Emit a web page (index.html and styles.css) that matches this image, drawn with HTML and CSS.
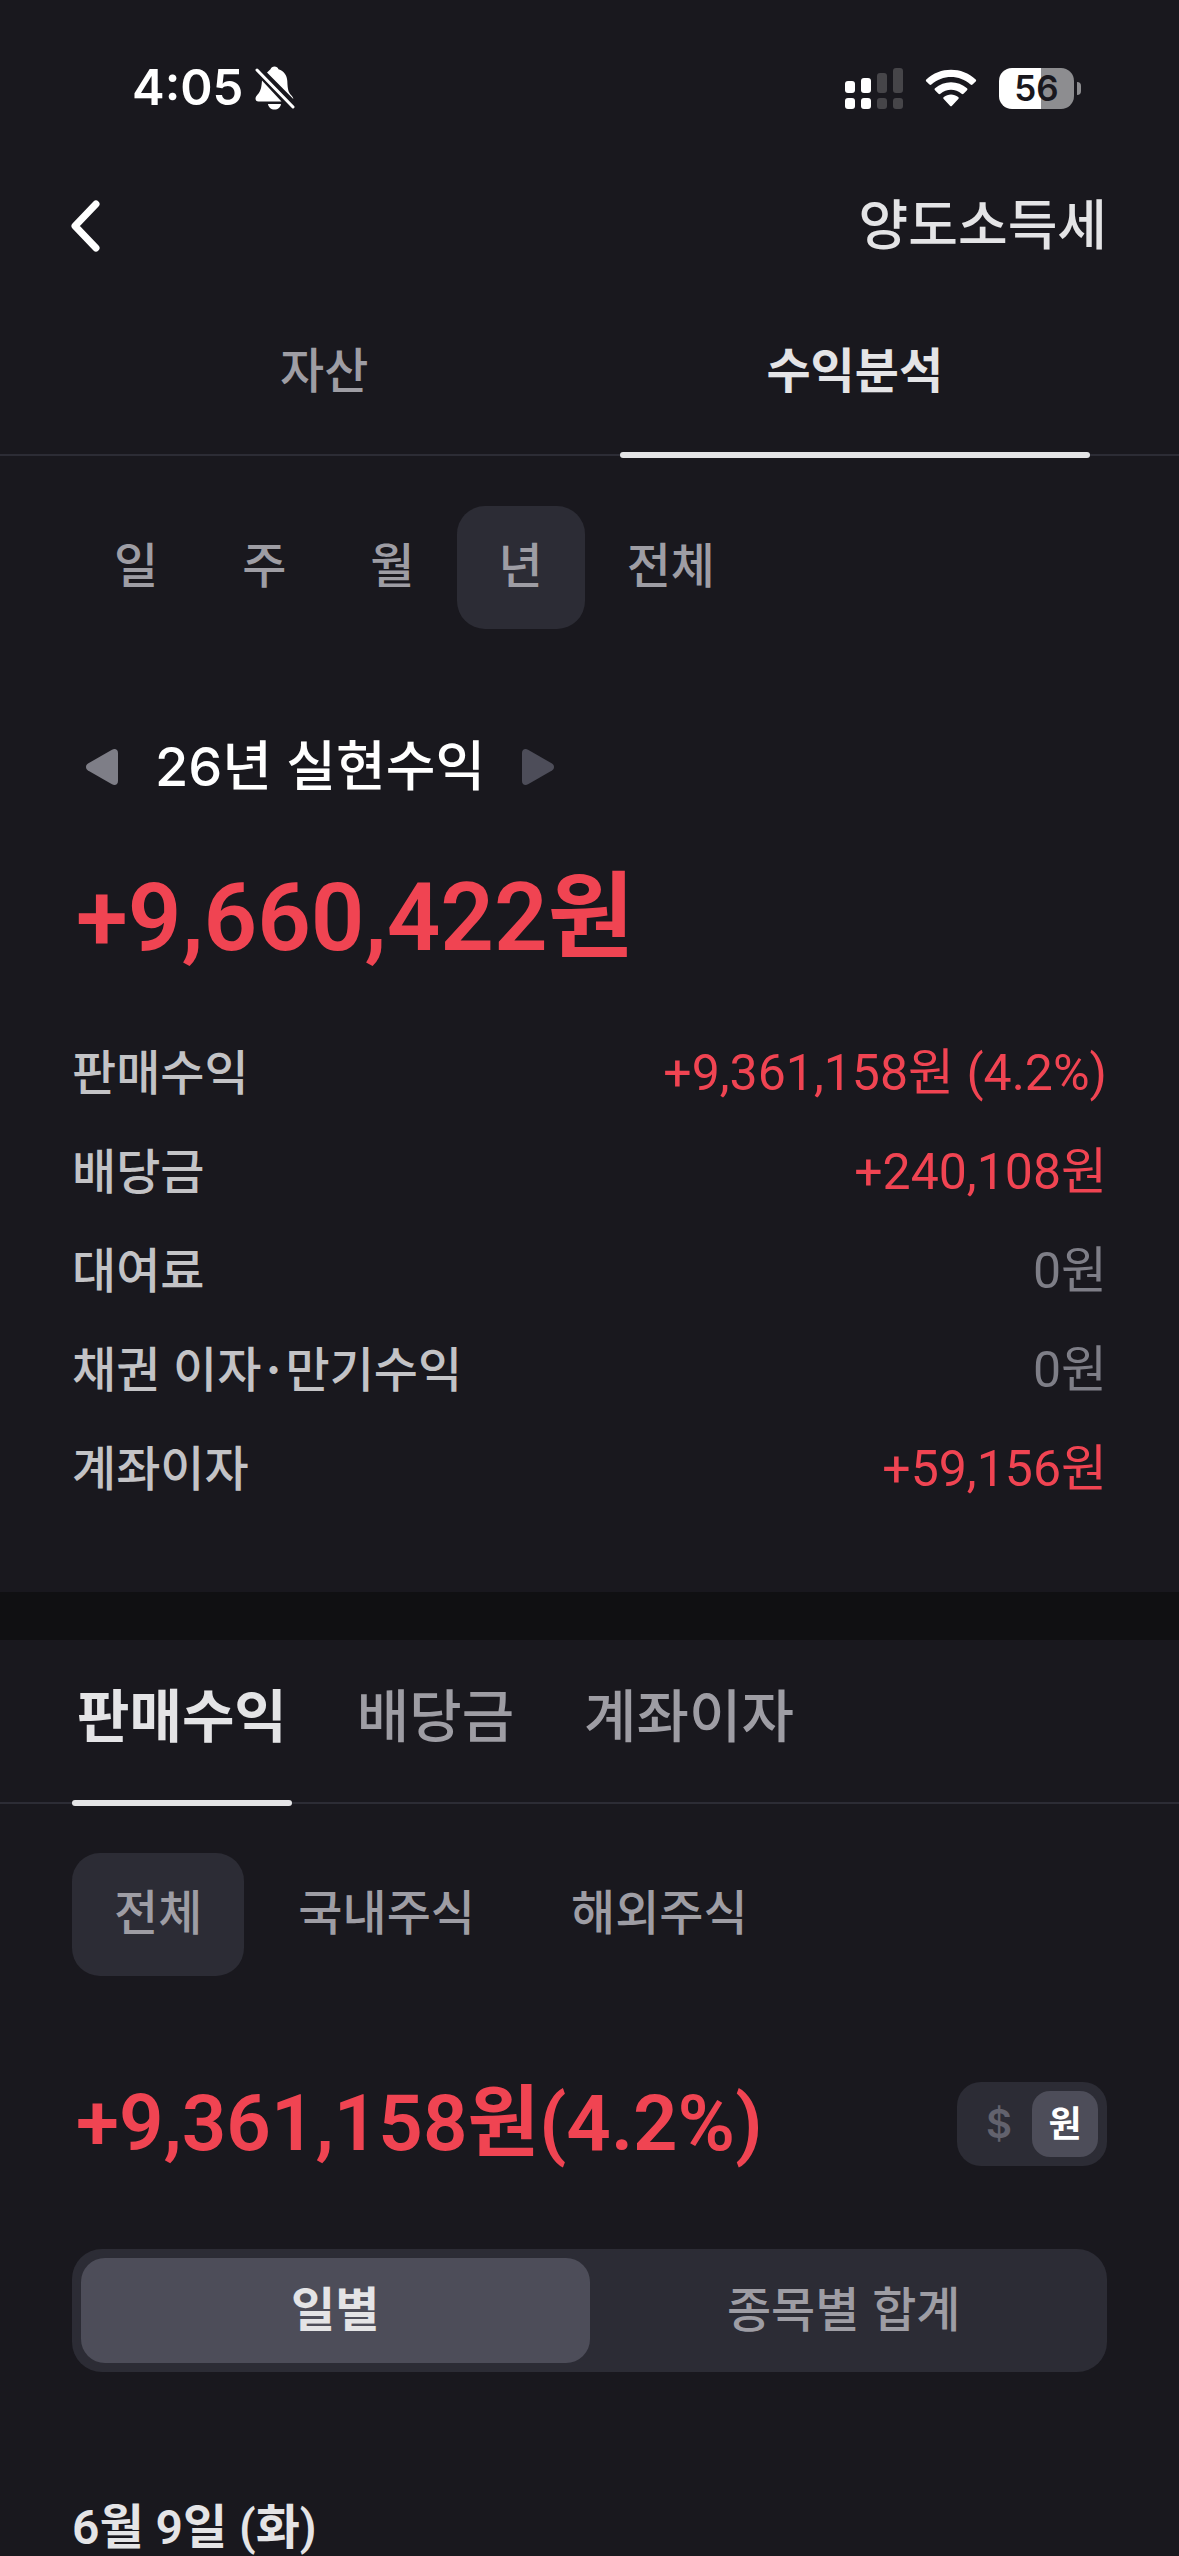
FILE: index.html
```
<!DOCTYPE html>
<html lang="ko">

<head>
    <meta charset="UTF-8">
    <meta name="viewport" content="width=device-width, initial-scale=1.0">
    <title>수익분석</title>
    <link rel="stylesheet" href="styles.css">
</head>

<body>
    <div class="status">
        <div class="status-left">
            <span class="time">4:05</span>
            <svg class="bell" width="40" height="44" viewBox="0 0 40 44">
                <path fill="#fff" d="M12 6.500C13.500 5 15 4 15.500 3.300C16.200 1.500 17.500 .5 19.500 .5C21.500 .5 22.800 1.500 23.500 3.300C29 5 32 9.500 32.300 15C32.600 24 33.500 26 36 29C37.300 30.500 38.300 31.500 38.300 33Z" />
                <path fill="#fff" d="M7 14.500L26.500 35.500H3.500C1.500 35.500 .5 34.300 .5 32.500C.5 30.500 2 29.500 3.500 27.500C6 24 6.500 21 7 14.500Z" />
                <path fill="#fff" d="M13 38H26C25.500 41.500 23 43.500 19.500 43.500C16 43.500 13.500 41.500 13 38Z" />
                <path stroke="#fff" stroke-width="3" stroke-linecap="round" d="M2 4L38 41" />
            </svg>
        </div>
        <div class="status-right">
            <svg width="58" height="41" viewBox="0 0 58 41" fill="#fff">
                <rect x="0" y="13" width="10" height="12" rx="3" />
                <rect x="16" y="10" width="10" height="15" rx="3" />
                <rect x="0" y="30" width="10" height="11" rx="3" />
                <rect x="16" y="30" width="10" height="11" rx="3" />
                <g fill="#464549">
                    <rect x="32" y="5" width="10" height="20" rx="3" />
                    <rect x="48" y="0" width="10" height="25" rx="3" />
                    <rect x="32" y="30" width="10" height="11" rx="3" />
                    <rect x="48" y="30" width="10" height="11" rx="3" />
                </g>
            </svg>
            <svg class="wifi" width="52" height="38" viewBox="0 0 52 38" fill="#fff">
                <path d="M1.300 10.500C15 -2.500 37 -2.500 50.700 10.500C51.300 11.100 51.300 11.800 50.700 12.400L47.500 15.600C46.900 16.200 46.200 16.200 45.600 15.600C34.500 5.500 17.500 5.500 6.400 15.600C5.800 16.200 5.100 16.200 4.500 15.600L1.300 12.400C.7 11.800 .7 11.100 1.300 10.500Z" />
                <path d="M10 19.300C19 11.100 33 11.100 42 19.300C42.600 19.900 42.600 20.600 42 21.200L38.500 24.700C37.900 25.300 37.200 25.300 36.600 24.800C30.500 19.500 21.500 19.500 15.400 24.800C14.800 25.300 14.100 25.300 13.500 24.700L10 21.200C9.400 20.600 9.400 19.900 10 19.300Z" />
                <path d="M18.800 28C23 24.600 29 24.600 33.200 28C33.900 28.600 33.900 29.300 33.300 29.900L27 36.800C26.400 37.500 25.600 37.500 25 36.800L18.700 29.900C18.100 29.300 18.100 28.600 18.800 28Z" />
            </svg>
            <div class="battery"><span class="battery-level">56</span></div>
        </div>
    </div>

    <header class="header">
        <button class="back" type="button" aria-label="뒤로">
            <svg width="30" height="54" viewBox="0 0 30 54" fill="none" stroke="#fff" stroke-width="7" stroke-linecap="round" stroke-linejoin="round">
                <path d="M26 5L5 27L26 49" />
            </svg>
        </button>
        <a class="header-link" href="#">양도소득세</a>
    </header>

    <nav class="tabs">
        <button class="tab" type="button">자산</button>
        <button class="tab selected" type="button">수익분석</button>
    </nav>

    <main>
        <section class="summary">
            <div class="filters period">
                <button class="filter" type="button">일</button>
                <button class="filter" type="button">주</button>
                <button class="filter" type="button">월</button>
                <button class="filter selected" type="button">년</button>
                <button class="filter" type="button">전체</button>
            </div>

            <div class="year">
                <button class="arrow" type="button" aria-label="이전">
                    <svg width="34" height="38" viewBox="0 0 34 38">
                        <path fill="#7e7e87" d="M3 15.500L27 1.700C30 0 33 1.500 33 5V33C33 36.500 30 38 27 36.300L3 22.500C.3 20.800 .3 17.200 3 15.500Z" />
                    </svg>
                </button>
                <h1 class="year-title">26년 실현수익</h1>
                <button class="arrow" type="button" aria-label="다음">
                    <svg width="34" height="38" viewBox="0 0 34 38">
                        <path fill="#4d4d59" d="M31 15.500L7 1.700C4 0 1 1.500 1 5V33C1 36.500 4 38 7 36.300L31 22.500C33.700 20.800 33.700 17.200 31 15.500Z" />
                    </svg>
                </button>
            </div>

            <p class="total">+9,660,422원</p>

            <dl class="rows">
                <div class="row">
                    <dt>판매수익</dt>
                    <dd class="up">+9,361,158원 (4.2%)</dd>
                </div>
                <div class="row">
                    <dt>배당금</dt>
                    <dd class="up">+240,108원</dd>
                </div>
                <div class="row">
                    <dt>대여료</dt>
                    <dd>0원</dd>
                </div>
                <div class="row">
                    <dt>채권 이자<span class="dot">·</span>만기수익</dt>
                    <dd>0원</dd>
                </div>
                <div class="row">
                    <dt>계좌이자</dt>
                    <dd class="up">+59,156원</dd>
                </div>
            </dl>
        </section>

        <section class="detail">
            <nav class="subtabs">
                <button class="subtab selected" type="button">판매수익</button>
                <button class="subtab" type="button">배당금</button>
                <button class="subtab" type="button">계좌이자</button>
            </nav>

            <div class="filters market">
                <button class="filter selected" type="button">전체</button>
                <button class="filter" type="button">국내주식</button>
                <button class="filter" type="button">해외주식</button>
            </div>

            <div class="amount">
                <p class="amount-text">+9,361,158원(4.2%)</p>
                <div class="currency">
                    <button class="unit" type="button">$</button>
                    <button class="unit selected" type="button">원</button>
                </div>
            </div>

            <div class="segment">
                <button class="segment-item selected" type="button">일별</button>
                <button class="segment-item" type="button">종목별 합계</button>
            </div>

            <h2 class="date">6월 9일 (화)</h2>
        </section>
    </main>
</body>

</html>
```
FILE: styles.css
```
* {
    margin: 0;
    padding: 0;
    box-sizing: border-box;
}
body {
    background-color: #19181e;
    color: #e4e4e6;
    font-family: "Inter", "Noto Sans CJK KR", sans-serif;
    font-size: 48px;
    font-weight: 500;
    line-height: 60px;
}
button {
    border: none;
    background: none;
    color: inherit;
    font: inherit;
    cursor: pointer;
}
a {
    color: inherit;
    text-decoration: none;
}
svg {
    display: block;
}

/* 상태바 */
.status {
    display: flex;
    justify-content: space-between;
    align-items: center;
    height: 176px;
    padding: 0 105px 0 132px;
    color: #fff;
}
.status-left, .status-right {
    display: flex;
    align-items: center;
}
.status-left {
    gap: 12px;
}
.status-right {
    gap: 22px;
}
.time {
    font-size: 49px;
    font-weight: 600;
}
.battery {
    position: relative;
    width: 75px;
    height: 41px;
    border-radius: 13px;
    background: linear-gradient(to right, #fff 56%, #8d8d90 56%);
    color: #19181e;
    text-align: center;
}
.battery::after {
    content: "";
    position: absolute;
    top: 14px;
    right: -7px;
    width: 4px;
    height: 13px;
    border-radius: 0 4px 4px 0;
    background-color: #8d8d90;
}
.battery-level {
    display: block;
    font-size: 35px;
    font-weight: 600;
    line-height: 41px;
}

/* 헤더 */
.header {
    display: flex;
    justify-content: space-between;
    align-items: center;
    height: 100px;
    padding: 0 72px 0 70px;
}
.header-link {
    font-size: 54px;
}

/* 상단 탭 */
.tabs {
    display: flex;
    padding: 0 59px;
    border-bottom: 2px solid #2c2c35;
}
.tab {
    position: relative;
    flex: 1;
    padding: 65px 0 53px;
    color: #9e9da4;
}
.tab.selected, .subtab.selected {
    color: #e4e4e6;
    font-weight: 600;
}
.tab.selected::after, .subtab.selected::after {
    content: "";
    position: absolute;
    bottom: -4px;
    left: 0;
    right: 0;
    height: 6px;
    border-radius: 3px;
    background-color: #e4e4e6;
}
.tab.selected::after {
    left: 30px;
    right: 30px;
}

/* 필터 */
.filters {
    display: flex;
}
.filter {
    padding: 30px 42px 33px;
    border-radius: 28px;
    color: #9e9da4;
}
.filter.selected {
    background-color: #2c2c35;
}

/* 실현수익 */
.summary {
    padding: 50px 72px 93px;
}
.year {
    display: flex;
    align-items: center;
    gap: 36px;
    margin-top: 102px;
    padding-left: 13px;
}
.year-title {
    color: #fff;
    font-size: 54px;
    font-weight: 500;
    line-height: 72px;
}
/* 금액은 숫자 폭이 좁은 Roboto 사용 */
.total, .amount-text, .row dd, .date {
    font-family: "Roboto", "Noto Sans CJK KR", sans-serif;
}
.total {
    margin-top: 59px;
    padding-left: 4px;
    color: #f04452;
    font-size: 94px;
    font-weight: 600;
    line-height: 112px;
}
.rows {
    display: grid;
    gap: 39px;
    margin-top: 69px;
}
.row {
    display: flex;
    justify-content: space-between;
}
.row dt {
    color: #c3c3c6;
}
.row dd {
    color: #7e7e87;
    font-size: 50px;
    font-weight: 400;
}
.row .up {
    color: #f04452;
}
.dot {
    margin: 0 4px;
    font-weight: 700;
}

/* 상세 */
.detail {
    border-top: 48px solid #101012;
}
.subtabs {
    display: flex;
    gap: 60px;
    padding: 0 72px;
    border-bottom: 2px solid #2c2c35;
}
.subtab {
    position: relative;
    padding: 41px 5px 49px;
    color: #9e9da4;
    font-size: 57px;
    line-height: 72px;
}
.market {
    gap: 12px;
    padding: 49px 72px 0;
}
.amount {
    display: flex;
    justify-content: space-between;
    align-items: center;
    margin-top: 106px;
    padding: 0 72px 0 76px;
}
.amount-text {
    color: #f04452;
    font-size: 78px;
    font-weight: 600;
    line-height: 84px;
}
.currency {
    display: flex;
    padding: 9px;
    border-radius: 24px;
    background-color: #2c2c35;
}
.unit {
    width: 66px;
    height: 66px;
    border-radius: 18px;
    color: #62626d;
    font-size: 40px;
    font-weight: 600;
    line-height: 66px;
}
.unit.selected {
    background-color: #4d4d59;
    color: #fff;
    font-size: 36px;
    font-weight: 700;
}
.segment {
    display: flex;
    margin: 83px 72px 0;
    padding: 9px;
    border-radius: 30px;
    background-color: #2c2c35;
}
.segment-item {
    flex: 1;
    padding: 22px 0 23px;
    border-radius: 24px;
    color: #9e9da4;
}
.segment-item.selected {
    background-color: #4d4d59;
    color: #e4e4e6;
    font-weight: 600;
}
.date {
    margin-top: 128px;
    padding: 0 72px;
    font-size: 48px;
    font-weight: 600;
    line-height: 56px;
}
```
